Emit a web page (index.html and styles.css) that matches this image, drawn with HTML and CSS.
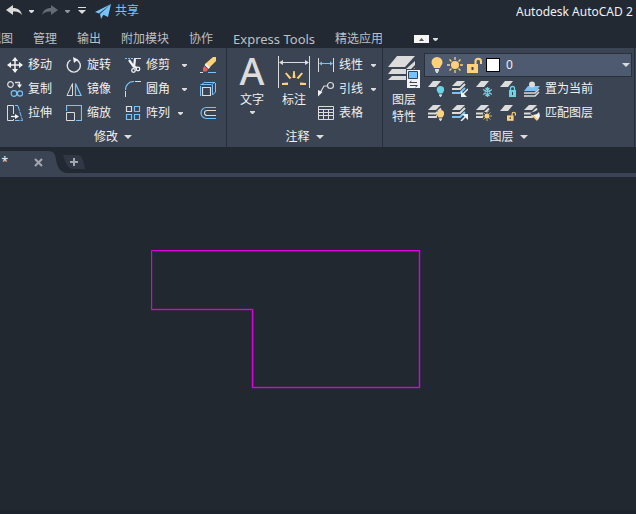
FILE: index.html
```html
<!DOCTYPE html>
<html lang="zh-CN">
<head>
<meta charset="utf-8">
<title>Autodesk AutoCAD</title>
<link rel="stylesheet" href="styles.css">
</head>
<body>
<svg class="defs" aria-hidden="true">
  <symbol id="caret" viewBox="0 0 8 4"><path d="M0 0h8L4 4z" fill="#dcdcdc"/></symbol>
  <symbol id="small-caret" viewBox="0 0 5 3"><path d="M0 0h5v1L3 3H2L0 1z" fill="#dcdcdc"/></symbol>
  <symbol id="bulb" viewBox="0 0 12 16"><path d="M6 0a5.500 5.500 0 0 1 5.500 5.500c0 2.500-2 3-2.500 5.500H3C2.500 8.500.500 8 .500 5.500A5.500 5.500 0 0 1 6 0z" fill="currentColor"/><path d="M4 12h4v2.500H7V16H5v-1.500H4z" fill="#dcdcdc"/></symbol>
  <symbol id="sun" viewBox="0 0 16 16"><circle cx="8" cy="8" r="4" fill="#ffd27a"/><path d="M8 0v3M8 13v3M0 8h3M13 8h3M2.500 2.500l2 2M11.500 11.500l2 2M13.500 2.500l-2 2M4.500 11.500l-2 2" stroke="#ffd27a" stroke-width="1.300"/></symbol>
  <symbol id="unlock" viewBox="0 0 15 16"><path d="M0 7h11v9H0z" fill="#ffd27a"/><path d="M8.500 7V4.500a2.700 2.700 0 0 1 5.500 0V7" fill="none" stroke="#ffd27a" stroke-width="2"/><path d="M4.500 10h2v3h-2z" fill="#3b4453"/></symbol>
  <symbol id="sheet" viewBox="0 0 16 6"><path d="M5 0h8L8 6H0z" fill="#dcdcdc"/></symbol>
  <symbol id="stack" viewBox="0 0 16 16"><path d="M5 0h8L8 5H0z" fill="#dcdcdc"/><path d="M0 8.500h8l5-5M0 12h8l5-5" fill="none" stroke="#dcdcdc" stroke-width="2"/></symbol>
</svg>

<header class="titlebar">
  <nav class="quick" aria-label="快速访问">
    <button class="plain" aria-label="放弃"><svg width="16" height="12" viewBox="0 0 16 12"><path d="M0 5l7-5v3c5 0 8 2.500 9 7-2.500-3-5-3.500-9-3.500V10z" fill="#dcdcdc"/></svg></button>
    <button class="plain" aria-label="放弃列表"><svg width="5" height="3"><use href="#small-caret"/></svg></button>
    <button class="plain redo" aria-label="重做"><svg width="16" height="12" viewBox="0 0 16 12"><path d="M16 5L9 0v3C4 3 1 5.500 0 10c2.500-3 5-3.500 9-3.500V10z" fill="#656b73"/></svg></button>
    <button class="plain" aria-label="重做列表"><svg class="dim" width="5" height="3"><use href="#small-caret"/></svg></button>
    <button class="plain custom" aria-label="自定义"><svg width="8" height="8" viewBox="0 0 8 8"><path d="M0 0h8v1H0zM0 3h8L4 7z" fill="#dcdcdc"/></svg></button>
    <button class="plain share"><svg width="16" height="15" viewBox="0 0 16 15"><path d="M16 0L0 8l4 1.500zM16 0L5 10l1 5 2-3.500zM16 0L8 10.500l5 2.500z" fill="#76c3fb"/></svg>共享</button>
  </nav>
  <h1 class="product">Autodesk AutoCAD 2</h1>
</header>

<nav class="tabs" aria-label="功能区选项卡">
  <a href="#">视图</a><a href="#">管理</a><a href="#">输出</a><a href="#">附加模块</a><a href="#">协作</a><a class="latin" href="#">Express Tools</a><a href="#">精选应用</a>
  <button class="plain minimize" aria-label="最小化功能区"><svg width="15" height="8" viewBox="0 0 15 8"><path d="M0 0h15v8H0z" fill="#f5f5f5"/><path d="M5 6h5L7.500 3z" fill="#555"/></svg><svg width="5" height="3"><use href="#small-caret"/></svg></button>
</nav>

<main class="ribbon">
  <section class="panel modify">
    <div class="body modify-grid">
      <button class="tool"><svg width="16" height="16" viewBox="0 0 16 16"><path d="M8 1v14M1 8h14" stroke="#f2f2f2" stroke-width="1.500"/><path d="M8 0l3 4H5zM8 16l3-4H5zM0 8l4-3v6zM16 8l-4-3v6z" fill="#f2f2f2"/></svg>移动</button>
      <button class="tool"><svg width="16" height="16" viewBox="0 0 16 16"><path d="M10 2.500A6.500 6.500 0 1 1 4.500 3" fill="none" stroke="#e4e4e4" stroke-width="1.400"/><path d="M7 0l5 2.500L8 6z" fill="#f2f2f2"/></svg>旋转</button>
      <button class="tool"><svg width="16" height="16" viewBox="0 0 16 16"><path d="M0 1.500h8" stroke="#76c3fb" stroke-dasharray="2 1"/><path d="M9 1.500h7" stroke="#dcdcdc"/><path d="M4 3l5 7M10 2L9 10" stroke="#f2f2f2" stroke-width="2.200"/><circle cx="8.500" cy="13.500" r="1.800" fill="none" stroke="#f2f2f2" stroke-width="1.300"/><circle cx="13" cy="12" r="1.800" fill="none" stroke="#f2f2f2" stroke-width="1.300"/><path d="M8 9l4 2" stroke="#f2f2f2" stroke-width="2"/></svg>修剪<svg class="drop" width="5" height="3"><use href="#small-caret"/></svg></button>
      <button class="tool" aria-label="删除"><svg width="16" height="16" viewBox="0 0 16 16"><path d="M13 0h3v4l-7 7-4-4z" fill="#ffd27a"/><path d="M6 6.500l4 4-1.500 1.500-4-4z" fill="#f2f2f2"/><path d="M4.500 9l3.500 3.500-1.500 2H3V11z" fill="#f0605a"/><path d="M0 15.500h3" stroke="#dcdcdc"/><path d="M8 15.500h8" stroke="#76c3fb"/></svg></button>

      <button class="tool"><svg width="16" height="16" viewBox="0 0 16 16"><circle cx="3.500" cy="3.500" r="2.800" fill="none" stroke="#dcdcdc" stroke-width="1.200"/><path d="M8 1.500h4.500V4" fill="none" stroke="#dcdcdc" stroke-width="1.300"/><path d="M10 3.500h5L12.500 7z" fill="#f2f2f2"/><circle cx="7" cy="12.500" r="2.800" fill="none" stroke="#76c3fb" stroke-width="1.200"/><circle cx="13" cy="12.500" r="2.600" fill="none" stroke="#76c3fb" stroke-width="1.200"/></svg>复制</button>
      <button class="tool"><svg width="16" height="16" viewBox="0 0 16 16"><path d="M6.500 2.500v12H1z" fill="none" stroke="#dcdcdc"/><path d="M9.500 2.500v12H15z" fill="none" stroke="#76c3fb" stroke-width="1.200"/></svg>镜像</button>
      <button class="tool"><svg width="16" height="16" viewBox="0 0 16 16"><path d="M.500 16v-6M10 .500h6" stroke="#dcdcdc"/><path d="M.500 9C.500 4 4 .500 9 .500" fill="none" stroke="#76c3fb" stroke-width="1.200"/></svg>圆角<svg class="drop" width="5" height="3"><use href="#small-caret"/></svg></button>
      <button class="tool" aria-label="分解"><svg width="16" height="16" viewBox="0 0 16 16"><path d="M.500 5v10M5 1.500h10M1 4l4-3M11.500 4L15 1M15.500 2v9M12.500 14l3-3M.500 3.500h11M12.500 4v10" fill="none" stroke="#76c3fb"/><path d="M2.500 6.500h8v8h-8z" fill="none" stroke="#dcdcdc" stroke-width="1.200"/></svg></button>

      <button class="tool"><svg width="16" height="16" viewBox="0 0 16 16"><path d="M6.500 9V.500h-6v15h6V14" fill="none" stroke="#dcdcdc"/><path d="M4 11.500h6" stroke="#f2f2f2" stroke-width="1.300"/><path d="M8 9l4 2.500L8 14z" fill="#f2f2f2"/><path d="M8 .500h3" stroke="#76c3fb"/><path d="M11 1l4.500 14.500H8" fill="none" stroke="#76c3fb" stroke-dasharray="5 1"/></svg>拉伸</button>
      <button class="tool"><svg width="16" height="16" viewBox="0 0 16 16"><path d="M.500 6V.500h15v15H10" fill="none" stroke="#76c3fb" stroke-width="1.200"/><path d="M.500 7.500h8v8h-8z" fill="none" stroke="#dcdcdc"/></svg>缩放</button>
      <button class="tool near"><svg width="16" height="16" viewBox="0 0 16 16"><path d="M1.500 1.500h5v5h-5z" fill="none" stroke="#dcdcdc" stroke-width="1.200"/><path d="M9.500 1.500h5v5h-5zM1.500 9.500h5v5h-5zM9.500 9.500h5v5h-5z" fill="none" stroke="#76c3fb" stroke-width="1.200"/></svg>阵列<svg class="drop" width="5" height="3"><use href="#small-caret"/></svg></button>
      <button class="tool" aria-label="偏移"><svg width="16" height="16" viewBox="0 0 16 16"><path d="M16 2.500H6.500a5.500 5.500 0 0 0 0 11H16" fill="none" stroke="#76c3fb" stroke-width="1.200"/><path d="M16 5.500H7a2.500 2.500 0 0 0 0 5h9" fill="none" stroke="#dcdcdc" stroke-width="1.200"/></svg></button>
    </div>
    <button class="caption">修改<svg width="8" height="4"><use href="#caret"/></svg></button>
  </section>

  <section class="panel annotate">
    <div class="body annotate-body">
      <button class="big"><span class="glyph">A</span><span>文字</span><svg class="under" width="5" height="3"><use href="#small-caret"/></svg></button>
      <button class="big"><svg width="32" height="32" viewBox="0 0 32 32"><path d="M.500 0v32M31.500 0v32M2 6.500h28" stroke="#dcdcdc"/><path d="M1 6.500l4-2.500v5zM31 6.500l-4-2.500v5z" fill="#dcdcdc"/><path d="M14.500 22l.8-7h1.400l.8 7zM11.500 23L7 17.500 8.500 16.500 13.500 22zM20.500 23l4.500-5.500-1.500-1-5 5.500zM10 26.500L4 27v2h6zM22 26.500l6 .500v2h-6z" fill="#ffd27a"/></svg><span>标注</span></button>
      <div class="column">
        <button class="tool near"><svg width="16" height="16" viewBox="0 0 16 16"><path d="M.500 1v14M15.500 1v14" stroke="#dcdcdc"/><path d="M2 6.500h12" stroke="#76c3fb"/><path d="M1 6.500L4 4.500v4zM15 6.500l-3-2v4z" fill="#76c3fb"/></svg>线性<svg class="drop" width="5" height="3"><use href="#small-caret"/></svg></button>
        <button class="tool near"><svg width="16" height="16" viewBox="0 0 16 16"><circle cx="12.500" cy="4.500" r="3" fill="none" stroke="#dcdcdc" stroke-width="1.200"/><path d="M9 5H6L2 12" fill="none" stroke="#dcdcdc" stroke-width="1.200"/><path d="M0 9l4.500 2L0 15.500z" fill="#f2f2f2"/></svg>引线<svg class="drop" width="5" height="3"><use href="#small-caret"/></svg></button>
        <button class="tool"><svg width="16" height="16" viewBox="0 0 16 16"><path d="M.500 1.500h15v13H.500zM0 4.500h16M0 7.500h16M0 10.500h16M5.500 5v10M10.500 5v10" fill="none" stroke="#dcdcdc"/></svg>表格</button>
      </div>
    </div>
    <button class="caption">注释<svg width="8" height="4"><use href="#caret"/></svg></button>
  </section>

  <section class="panel layers">
    <div class="body layers-body">
      <button class="big"><svg width="32" height="32" viewBox="0 0 32 32"><path d="M9 0h18L17 11H0z" fill="#dcdcdc"/><path d="M4 13l-4 5h18l9-9V5l-9 8zM4 20l-4 4h18l9-9v-3l-9 8z" fill="#dcdcdc"/><path d="M18 13h14v19H18z" fill="#3b4453"/><path d="M19 14h13v18H19z" fill="#f2f2f2"/><path d="M20.500 15.500h9v7h-9z" fill="#76c3fb" stroke="#3b4453"/><path d="M22 26.500h7M22 29.500h7M23.500 25l-2 1.500M27.500 31l2-1.500" stroke="#3b4453"/></svg><span>图层<br>特性</span></button>
      <div class="layer-tools">
        <div class="combo">
          <svg class="gold" width="12" height="16"><use href="#bulb"/></svg>
          <svg width="16" height="16"><use href="#sun"/></svg>
          <svg width="15" height="16"><use href="#unlock"/></svg>
          <span class="swatch"></span>
          <select aria-label="图层"><option>0</option></select>
          <svg class="combo-caret" width="8" height="4"><use href="#caret"/></svg>
        </div>
        <div class="layer-row">
          <button class="tool" aria-label="关闭图层"><svg class="cyan" width="16" height="16"><use href="#sheet" width="16" height="6"/><use href="#bulb" x="8" y="5" width="9" height="11"/></svg></button>
          <button class="tool" aria-label="隔离图层"><svg width="16" height="16"><path d="M0 12h8l5-5" fill="none" stroke="#76c3fb" stroke-width="2"/><path d="M5 0h8L8 5H0z" fill="#dcdcdc"/><path d="M0 8h8l5-5" fill="none" stroke="#dcdcdc" stroke-width="2"/><path d="M16 8l-5 5" stroke="#f2f2f2" stroke-width="1.500"/><path d="M9 10v6h6z" fill="#f2f2f2"/></svg></button>
          <button class="tool" aria-label="冻结图层"><svg width="16" height="16"><use href="#sheet" width="16" height="6"/><path d="M11.500 6v10M7 8.500l9 5M7 13.500l9-5M9.500 7l2 2 2-2M9.500 15l2-2 2 2" fill="none" stroke="#66d6e2" stroke-width="1.300"/><circle cx="11.500" cy="11" r="2.500" fill="none" stroke="#66d6e2"/></svg></button>
          <button class="tool" aria-label="锁定图层"><svg width="16" height="16"><use href="#sheet" width="16" height="6"/><path d="M9 9h7v7H9z" fill="#66d6e2"/><path d="M10.500 9V7.500a2 2 0 0 1 4 0V9" fill="none" stroke="#66d6e2" stroke-width="1.300"/><path d="M12 11h1v3h-1z" fill="#3b4453"/></svg></button>
          <button class="tool"><svg width="16" height="16"><path d="M4 5h12l-4 5H0z" fill="#76c3fb"/><path d="M0 12h11l4-4M0 15h11l4-4" fill="none" stroke="#dcdcdc" stroke-width="1.500"/><circle cx="8" cy="3.500" r="3" fill="#dcdcdc"/></svg>置为当前</button>
        </div>
        <div class="layer-row">
          <button class="tool" aria-label="打开所有图层"><svg class="gold" width="16" height="16"><use href="#stack" width="16" height="16"/><path d="M9 6h7v10H9z" fill="#3b4453"/><use href="#bulb" x="8" y="5" width="9" height="11"/></svg></button>
          <button class="tool" aria-label="取消隔离"><svg width="16" height="16"><path d="M0 12h8l5-5" fill="none" stroke="#76c3fb" stroke-width="2"/><path d="M5 0h8L8 5H0z" fill="#dcdcdc"/><path d="M0 8h8l5-5" fill="none" stroke="#dcdcdc" stroke-width="2"/><path d="M9 16l5-5" stroke="#f2f2f2" stroke-width="1.500"/><path d="M16 9v6l-6-6z" fill="#f2f2f2"/></svg></button>
          <button class="tool" aria-label="解冻所有图层"><svg width="16" height="16"><use href="#stack" width="16" height="16"/><path d="M7 7h9v9H7z" fill="#3b4453"/><use href="#sun" x="6" y="6" width="10" height="10"/></svg></button>
          <button class="tool" aria-label="解锁图层"><svg width="16" height="16"><use href="#sheet" width="16" height="6"/><use href="#unlock" x="7" y="6" width="9" height="10"/></svg></button>
          <button class="tool"><svg width="16" height="16"><use href="#stack" width="16" height="16"/><path d="M6 8l9 8h1V6h-4z" fill="#3b4453"/><path d="M9 10l4-1 2-2 1 4-2 4z" fill="#f2f2f2"/><path d="M7 10l6 6 1-2-5-4z" fill="#ffd27a"/></svg>匹配图层</button>
        </div>
      </div>
    </div>
    <button class="caption">图层<svg width="8" height="4"><use href="#caret"/></svg></button>
  </section>
</main>

<nav class="files" aria-label="图形">
  <div class="file">
    <svg class="file-shape" width="68" height="22" viewBox="0 0 68 22"><path d="M0 0h48c6 0 7 3 8 8 1 8 4 14 12 14H0z" fill="#3b4453"/></svg>
    <a class="file-name" href="#">Drawing1*</a>
    <button class="plain close" aria-label="关闭"><svg width="9" height="9" viewBox="0 0 9 9"><path d="M1 1l7 7M8 1L1 8" stroke="#a4a8ae" stroke-width="2"/></svg></button>
  </div>
  <button class="plain add" aria-label="新图形"><svg width="22" height="14" viewBox="0 0 22 14"><path d="M0 0h14c5 0 6 4 8 14H11C4 14 3 8 0 0z" fill="#303846"/><path d="M11 3v8M7 7h8" stroke="#a4a8ae" stroke-width="2"/></svg></button>
</nav>

<section class="canvas" aria-label="绘图区">
  <svg class="drawing" width="270" height="139" viewBox="0 0 270 139" fill="none" stroke="#df00df"><path d="M.500 .500h268v137h-167v-78H.500z" stroke-width="2" opacity=".4"/><path d="M.500 .500h268v137h-167v-78H.500z"/></svg>
</section>
</body>
</html>
```
FILE: styles.css
```css
* {
  box-sizing: border-box;
}

body {
  margin: 0;
  min-height: 100vh;
  display: flex;
  flex-direction: column;
  overflow: hidden;
  background: #222933;
  color: #f0f0f0;
  font: 12px/16px "Noto Sans", "Noto Sans CJK SC", sans-serif;
}

svg {
  display: block;
  flex: none;
}

.defs {
  position: absolute;
  width: 0;
  height: 0;
}

button {
  display: flex;
  align-items: center;
  border: 0;
  padding: 0;
  background: none;
  color: inherit;
  font: inherit;
  white-space: nowrap;
}

a {
  color: inherit;
  text-decoration: none;
}

.gold {
  color: #ffd27a;
}

.cyan {
  color: #66d6e2;
}

.dim {
  opacity: 0.6;
}

/* Title bar */
.titlebar {
  display: flex;
  justify-content: space-between;
  height: 24px;
  white-space: nowrap;
}

.quick {
  display: flex;
  align-items: center;
  gap: 7px;
  padding: 0 0 2px 6px;
}

.redo,
.custom {
  margin-left: 1px;
}

.share {
  gap: 4px;
  margin-left: 2px;
  color: #76c3fb;
}

.product {
  width: 120px;
  margin: 0;
  overflow: hidden;
  font-size: 12px;
  font-weight: 400;
  line-height: 24px;
}

/* Ribbon tabs */
.tabs {
  display: flex;
  align-items: center;
  gap: 20px;
  height: 24px;
  padding-top: 6px;
  margin-left: -11px;
  color: #bdc0c5;
  white-space: nowrap;
}

.latin {
  font-size: 13px;
}

.minimize {
  gap: 4px;
  margin-left: 11px;
}

/* Ribbon */
.ribbon {
  display: flex;
  height: 99px;
  background: #3b4453;
}

.panel {
  display: flex;
  flex-direction: column;
  flex: none;
  padding-top: 5px;
  border-right: 1px solid #272e3a;
}

.modify {
  width: 227px;
}

.annotate {
  width: 156px;
}

.layers {
  flex: 1;
  margin-right: 1px;
}

.body {
  height: 72px;
}

.caption {
  justify-content: center;
  gap: 6px;
  height: 22px;
  padding-top: 2px;
}

.tool {
  gap: 5px;
  height: 24px;
}

.drop {
  margin-left: 7px;
}

.near .drop {
  margin-left: 3px;
}

.modify-grid {
  display: grid;
  grid-template-columns: 59px 59px 75px 16px;
  padding-left: 7px;
}

.annotate-body {
  display: grid;
  grid-template-columns: 42px 40px 1fr;
  padding-left: 9px;
}

.column {
  display: flex;
  flex-direction: column;
}

.big {
  flex-direction: column;
  width: 32px;
  height: 72px;
  padding-top: 3px;
  line-height: 17px;
}

.big span {
  margin-top: 3px;
}

.big .glyph {
  height: 32px;
  margin: 0;
  color: #dcdcdc;
  font-size: 38px;
  font-weight: 500;
  line-height: 28px;
}

.under {
  margin-top: 3px;
}

.layers-body {
  display: flex;
  gap: 4px;
  padding-left: 5px;
}

.layer-tools {
  flex: 1;
  padding-right: 2px;
}

.layer-row {
  display: flex;
  gap: 8px;
  padding-left: 4px;
}

.combo {
  display: flex;
  align-items: center;
  gap: 4px;
  height: 24px;
  padding: 0 1px 0 6px;
  border: 1px solid #2a313d;
  background: #4d5a70;
}

.swatch {
  width: 14px;
  height: 14px;
  border: 1px solid #000;
  background: #fff;
}

.combo select {
  appearance: none;
  flex: 1;
  border: 0;
  padding: 0 0 0 2px;
  background: transparent;
  color: inherit;
  font: inherit;
}

/* Drawing tabs */
.files {
  display: flex;
  height: 30px;
  padding-top: 4px;
  border-bottom: 4px solid #3b4453;
}

.file {
  position: relative;
  display: flex;
  align-items: center;
  justify-content: flex-end;
  width: 63px;
  padding-right: 20px;
}

.file-shape {
  position: absolute;
  top: 0;
  left: 0;
}

.file-name {
  position: relative;
  margin-right: 26px;
}

.close {
  position: relative;
}

.add {
  align-self: center;
}

/* Model space */
.canvas {
  flex: 1;
  padding: 73px 0 0 151px;
  background: #212830;
  border-bottom: 4px solid #1d232c;
}
```
